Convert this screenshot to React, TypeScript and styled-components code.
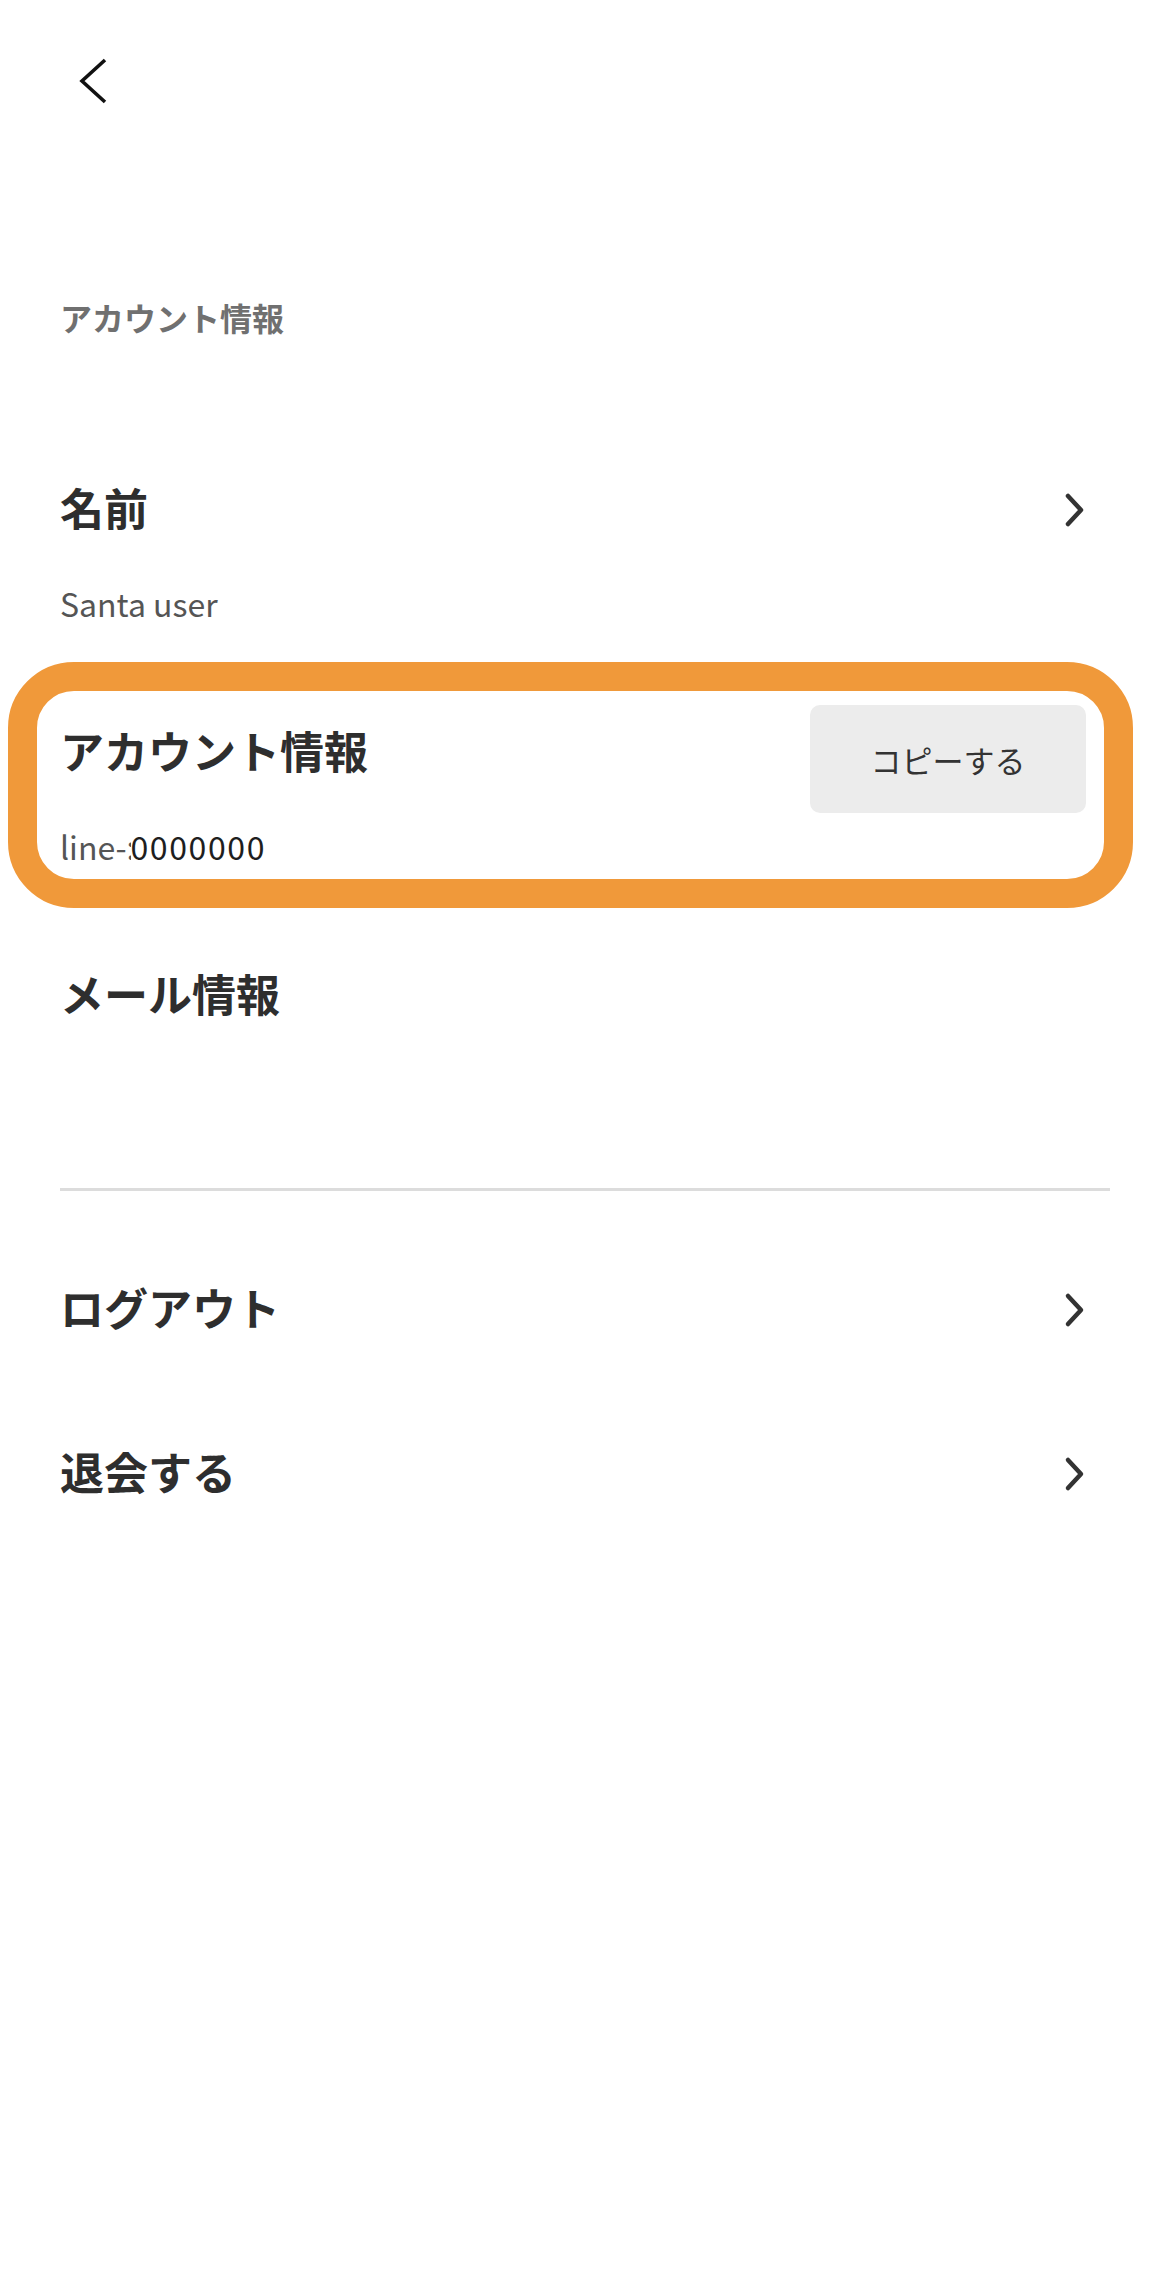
import React from 'react'
import styled, { createGlobalStyle } from 'styled-components'

const GlobalStyle = createGlobalStyle`
    html, body {
        margin: 0;
        padding: 0;
        background: #ffffff;
    }
    body {
        font-family: "Noto Sans CJK JP", "Noto Sans", sans-serif;
        color: #2e2e2e;
    }
`

const Page = styled.div`
    min-height: 100vh;
    padding: 0 60px;
    box-sizing: border-box;
`

const Header = styled.header`
    height: 162px;
    display: flex;
    align-items: center;
    margin-left: 18px;
`

const BackButton = styled.button`
    border: none;
    background: none;
    padding: 0;
    display: flex;
    cursor: pointer;
`

const SectionLabel = styled.h2`
    margin: 131px 0 0;
    font-size: 32px;
    line-height: 48px;
    font-weight: 700;
    color: #707070;
`

const InfoList = styled.div`
    margin-top: 115px;
    display: flex;
    flex-direction: column;
    gap: 68px;
`

const InfoItem = styled.div`
    position: relative;
    display: flex;
    flex-direction: column;
`

const TitleRow = styled.div`
    height: 108px;
    display: flex;
    align-items: center;
    justify-content: space-between;
`

const Title = styled.div`
    font-size: 44px;
    line-height: 60px;
    font-weight: 700;
    color: #2e2e2e;
    margin-bottom: 6px;
`

const Value = styled.div`
    margin-top: 15px;
    padding-bottom: 4px;
    min-height: 48px;
    font-size: 32px;
    line-height: 48px;
    color: #555555;
`

const Masked = styled.span`
    position: relative;
    margin-left: -5px;
    background: #ffffff;
    color: #1e1e1e;
    letter-spacing: 1.6px;
`

const CopyButton = styled.button`
    width: 276px;
    height: 108px;
    margin: 12px 24px 0 0;
    border: none;
    border-radius: 10px;
    background: #ececec;
    font-family: "Noto Sans CJK JP", "Noto Sans", sans-serif;
    font-size: 31px;
    color: #333333;
    cursor: pointer;
`

const Highlight = styled.div`
    position: absolute;
    left: -52px;
    top: -37px;
    width: 1125px;
    height: 246px;
    box-sizing: border-box;
    border: 29px solid #f0993a;
    border-radius: 66px;
    pointer-events: none;
`

const Divider = styled.hr`
    margin: 71px 0 0;
    border: none;
    height: 3px;
    background: #dcdcdc;
`

const MenuList = styled.nav`
    margin-top: 37px;
    display: flex;
    flex-direction: column;
`

const MenuRow = styled.div`
    height: 164px;
    display: flex;
    align-items: center;
    justify-content: space-between;
    cursor: pointer;
`

const ChevronWrap = styled.span`
    display: flex;
    margin-right: 23px;
`

const BackIcon = () =>
    <svg width="32" height="50" viewBox="0 0 32 50" fill="none">
        <polyline points="27,4 4,25 27,46" stroke="#111111" strokeWidth="3.6" />
    </svg>

const Chevron = () =>
    <ChevronWrap>
        <svg width="24" height="36" viewBox="0 0 24 36" fill="none">
            <polyline points="5,4 18,18 5,32" stroke="#333333" strokeWidth="4.5"
                strokeLinecap="round" strokeLinejoin="round" />
        </svg>
    </ChevronWrap>

const menu = ['ログアウト', '退会する']

const App = () =>
    <Page>
        <GlobalStyle />
        <Header>
            <BackButton aria-label="back"><BackIcon /></BackButton>
        </Header>

        <SectionLabel>アカウント情報</SectionLabel>

        <InfoList>
            <InfoItem>
                <TitleRow>
                    <Title>名前</Title>
                    <Chevron />
                </TitleRow>
                <Value>Santa user</Value>
            </InfoItem>

            <InfoItem>
                <TitleRow>
                    <Title>アカウント情報</Title>
                    <CopyButton>コピーする</CopyButton>
                </TitleRow>
                <Value>line-:<Masked>0000000</Masked></Value>
                <Highlight />
            </InfoItem>

            <InfoItem>
                <TitleRow>
                    <Title>メール情報</Title>
                </TitleRow>
                <Value />
            </InfoItem>
        </InfoList>

        <Divider />

        <MenuList>
            { menu.map(label =>
                <MenuRow key={ label }>
                    <Title>{ label }</Title>
                    <Chevron />
                </MenuRow>
            ) }
        </MenuList>
    </Page>

export default App
